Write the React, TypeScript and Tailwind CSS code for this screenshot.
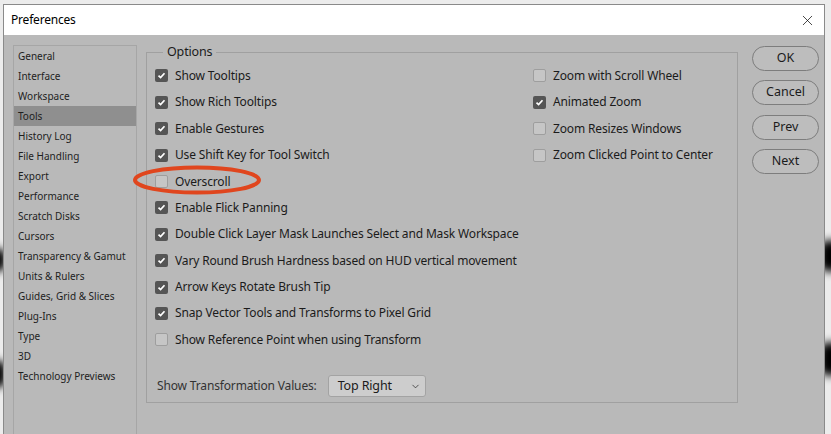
import { ChevronDown, X } from "lucide-react";

const categories = [
  "General",
  "Interface",
  "Workspace",
  "Tools",
  "History Log",
  "File Handling",
  "Export",
  "Performance",
  "Scratch Disks",
  "Cursors",
  "Transparency & Gamut",
  "Units & Rulers",
  "Guides, Grid & Slices",
  "Plug-Ins",
  "Type",
  "3D",
  "Technology Previews",
];

const leftOptions: [string, boolean][] = [
  ["Show Tooltips", true],
  ["Show Rich Tooltips", true],
  ["Enable Gestures", true],
  ["Use Shift Key for Tool Switch", true],
  ["Overscroll", false],
  ["Enable Flick Panning", true],
  ["Double Click Layer Mask Launches Select and Mask Workspace", true],
  ["Vary Round Brush Hardness based on HUD vertical movement", true],
  ["Arrow Keys Rotate Brush Tip", true],
  ["Snap Vector Tools and Transforms to Pixel Grid", true],
  ["Show Reference Point when using Transform", false],
];

const rightOptions: [string, boolean][] = [
  ["Zoom with Scroll Wheel", false],
  ["Animated Zoom", true],
  ["Zoom Resizes Windows", false],
  ["Zoom Clicked Point to Center", false],
];

function Check({ label, checked }: { label: string; checked: boolean }) {
  return (
    <div className="flex h-[26.4px] items-center gap-[7px]">
      {checked ? (
        <span className="flex h-[13px] w-[13px] shrink-0 items-center justify-center rounded-[2px] bg-[#555555]">
          <svg width="9" height="9" viewBox="0 0 9 9">
            <path d="M1.5 4.6 L3.6 6.6 L7.5 2.3" fill="none" stroke="#ffffff" strokeWidth="1.7" />
          </svg>
        </span>
      ) : (
        <span className="h-[13px] w-[13px] shrink-0 rounded-[2px] border border-[#9e9e9e] bg-[#c6c6c6]" />
      )}
      <span className="whitespace-nowrap">{label}</span>
    </div>
  );
}

export default function App() {
  return (
    <div className="relative h-[434px] w-[831px] overflow-hidden bg-[#ececec] font-['Noto_Sans',sans-serif]">
      {/* blurred dark shapes behind the dialog */}
      <div className="absolute right-[-10px] top-[240px] h-[32px] w-[22px] rounded-full bg-black blur-[4px]" />
      <div className="absolute right-[-10px] top-[342px] h-[34px] w-[22px] rounded-full bg-black blur-[4px]" />
      <div className="absolute left-[-12px] top-[248px] h-[24px] w-[18px] rounded-full bg-black blur-[4px]" />
      <div className="absolute left-[-12px] top-[360px] h-[28px] w-[18px] rounded-full bg-black blur-[4px]" />

      <div className="relative ml-[3px] mt-[4px] h-[440px] w-[822px] border border-[#8a8a8a] bg-[#b9b9b9]">
        <div className="flex h-[30px] items-center justify-between bg-white pl-[7px] pr-[8px] text-[12px] text-black">
          <span className="tracking-[-0.2px]">Preferences</span>
          <X size={17} strokeWidth={1} />
        </div>

        <div className="flex items-start">
          <div className="ml-[9px] mt-[10px] h-[400px] w-[124px] border border-[#a6a6a6] text-[10px] text-[#1e1e1e]">
            {categories.map((c) => (
              <div
                key={c}
                className={`flex h-[20px] items-center pl-[4px] ${c === "Tools" ? "bg-[#8f8f8f]" : ""}`}
              >
                {c}
              </div>
            ))}
          </div>

          <fieldset className="ml-[9px] mt-[8px] h-[360px] w-[592px] border border-[#a0a0a0] pl-[8px] text-[12px] tracking-[-0.15px] text-[#1b1b1b]">
            <legend className="ml-[8px] px-[4px] text-[12.5px] text-[#1b1b1b]">Options</legend>
            <div className="mt-[1px] flex">
              <div className="w-[378px]">
                {leftOptions.map(([l, c]) => (
                  <Check key={l} label={l} checked={c} />
                ))}
              </div>
              <div>
                {rightOptions.map(([l, c]) => (
                  <Check key={l} label={l} checked={c} />
                ))}
              </div>
            </div>
            <div className="mt-[22px] flex items-center gap-[11px] pl-[2px]">
              <span className="text-[#333333]">Show Transformation Values:</span>
              <div className="flex h-[22px] w-[98px] items-center justify-between rounded-[3px] border border-[#a3a3a3] bg-[#cdcdcd] pl-[9px] pr-[4px] text-[12.5px] text-[#1b1b1b]">
                <span>Top Right</span>
                <ChevronDown size={11} strokeWidth={1.5} />
              </div>
            </div>
          </fieldset>

          <div className="ml-[14px] mt-[11px] flex flex-col gap-[9.3px] text-[12.5px] text-[#1b1b1b]">
            {["OK", "Cancel", "Prev", "Next"].map((b) => (
              <div
                key={b}
                className="flex h-[25px] w-[67px] items-center justify-center rounded-full border border-[#7d7d7d] bg-[#bdbdbd]"
              >
                {b}
              </div>
            ))}
          </div>
        </div>
      </div>

      {/* red annotation ellipse */}
      <svg className="pointer-events-none absolute left-0 top-0" width="831" height="434">
        <ellipse cx="197" cy="180" rx="62" ry="12.5" fill="none" stroke="#e0461e" strokeWidth="4" />
      </svg>
    </div>
  );
}
